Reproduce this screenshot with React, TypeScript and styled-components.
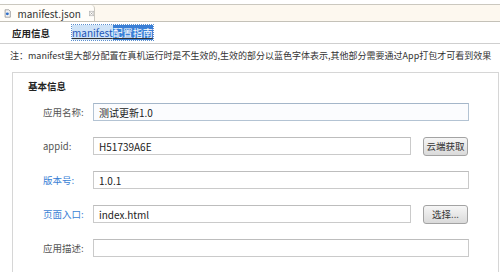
import styled, { createGlobalStyle } from 'styled-components';

const GlobalStyle = createGlobalStyle`
  body {
    margin: 0;
    background: #ffffff;
    font-family: "Noto Sans CJK SC", "Noto Sans", sans-serif;
  }
`;

const Frame = styled.div`
  width: 500px;
  height: 272px;
  overflow: hidden;
  background: #ffffff;
  color: #333;
  font-size: 10px;
`;

const TabBar = styled.div`
  padding-top: 4px;
  border-bottom: 1px solid #c4c1b8;
`;

const TabRow = styled.div`
  display: flex;
  height: 16px;
  border-top: 1px solid #cbc8bf;
  background: #fdf8ef;
`;

const Tab = styled.div`
  display: flex;
  align-items: center;
  width: 95px;
  padding-left: 4px;
  box-sizing: border-box;
  background: #fffdf9;
  border-right: 1px solid #cbc8bf;
  border-top-right-radius: 4px;
  font-size: 10px;
  color: #333;

  span {
    margin-left: 6px;
  }

  svg.close {
    margin-left: 8px;
  }
`;

const HeaderRow = styled.div`
  display: flex;
  align-items: center;
  height: 21px;
  padding-left: 12px;
  border-bottom: 1px solid #cfcfcf;
`;

const Title = styled.b`
  font-size: 9.5px;
  color: #222;
`;

const GuideLink = styled.a`
  margin-left: 22px;
  font-size: 10px;
  text-decoration: underline;
  outline: 1px dotted #5a8fd0;

  span:first-child {
    color: #1d56b8;
    background: #cfe3f7;
  }

  span:last-child {
    color: #ffffff;
    background: #3a7fd6;
  }
`;

const Note = styled.div`
  height: 22px;
  line-height: 23px;
  padding-left: 10px;
  white-space: nowrap;
  font-size: 9px;
  color: #333;
`;

const Fieldset = styled.section`
  margin: 6px 0 0 12px;
  width: 487px;
  height: 220px;
  box-sizing: border-box;
  border: 1px solid #d6d6d6;
  border-bottom: none;
`;

const Legend = styled.div`
  padding: 7px 0 0 15px;
  line-height: 12px;
  font-size: 9.5px;
  font-weight: bold;
  color: #222;
`;

const Rows = styled.div`
  display: grid;
  grid-auto-rows: 18px;
  row-gap: 16px;
  margin-top: 11px;
  padding-left: 30px;
`;

const Row = styled.div`
  display: flex;
  align-items: center;
`;

const Label = styled.label<{ $live?: boolean }>`
  width: 50px;
  font-size: 9.5px;
  color: ${p => (p.$live ? '#3a7fd5' : '#555')};
`;

const Field = styled.div<{ $short?: boolean; $focus?: boolean }>`
  width: ${p => (p.$short ? '318px' : '376px')};
  height: 18px;
  box-sizing: border-box;
  padding-left: 5px;
  display: flex;
  align-items: center;
  border: 1px solid ${p => (p.$focus ? '#b3c3d3' : '#cacaca')};
  border-top-color: ${p => (p.$focus ? '#a4b6c9' : '#bdbdbd')};
  background: ${p => (p.$focus ? '#fbfcfe' : '#ffffff')};
  font-size: 10px;
  color: #222;
`;

const Button = styled.button`
  margin-left: 12px;
  width: 45px;
  height: 19px;
  padding: 0;
  border: 1px solid #a3a3a3;
  border-radius: 3px;
  background: linear-gradient(#f6f6f6, #dadada);
  font-family: inherit;
  font-size: 9.5px;
  color: #333;
`;

function FileIcon() {
  return (
    <svg width="10" height="11" viewBox="0 0 10 11">
      <path d="M1.5 0.5h5l2 2v8h-7z" fill="#f4f4f4" stroke="#8a8a8a" />
      <circle cx="4.5" cy="6" r="2" fill="#2f6fc9" />
    </svg>
  );
}

function CloseIcon() {
  return (
    <svg className="close" width="7" height="7" viewBox="0 0 7 7">
      <rect x="0.5" y="0.5" width="6" height="6" fill="none" stroke="#b5b5b5" />
      <path d="M2 2l3 3M5 2l-3 3" stroke="#9a9a9a" />
    </svg>
  );
}

const fields = [
  { label: '应用名称:', value: '测试更新1.0', focus: true },
  { label: 'appid:', value: 'H51739A6E', button: '云端获取' },
  { label: '版本号:', value: '1.0.1', live: true },
  { label: '页面入口:', value: 'index.html', live: true, button: '选择...' },
  { label: '应用描述:', value: '' },
];

export default function App() {
  return (
    <Frame>
      <GlobalStyle />
      <TabBar>
        <TabRow>
          <Tab>
            <FileIcon />
            <span>manifest.json</span>
            <CloseIcon />
          </Tab>
        </TabRow>
      </TabBar>
      <HeaderRow>
        <Title>应用信息</Title>
        <GuideLink>
          <span>manifest</span>
          <span>配置指南</span>
        </GuideLink>
      </HeaderRow>
      <Note>
        注：manifest里大部分配置在真机运行时是不生效的,生效的部分以蓝色字体表示,其他部分需要通过App打包才可看到效果
      </Note>
      <Fieldset>
        <Legend>基本信息</Legend>
        <Rows>
          {fields.map(f => (
            <Row key={f.label}>
              <Label $live={f.live}>{f.label}</Label>
              <Field $short={!!f.button} $focus={f.focus}>
                {f.value}
              </Field>
              {f.button && <Button>{f.button}</Button>}
            </Row>
          ))}
        </Rows>
      </Fieldset>
    </Frame>
  );
}
